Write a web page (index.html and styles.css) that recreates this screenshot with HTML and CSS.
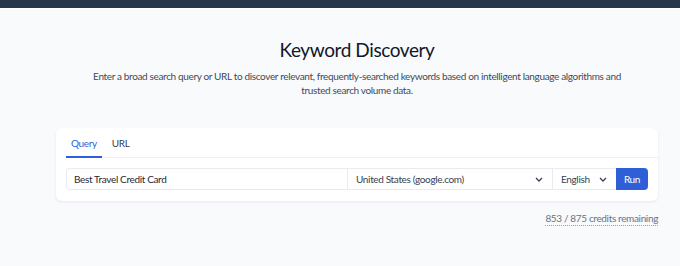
FILE: index.html
```html
<!DOCTYPE html>
<html lang="en">
  <head>
    <meta charset="UTF-8" />
    <meta name="viewport" content="width=device-width, initial-scale=1.0" />
    <title>Keyword Discovery</title>
    <link rel="stylesheet" href="styles.css">
  </head>
  <body>
    <div class="topbar"></div>

    <div class="page">
      <h1>Keyword Discovery</h1>
      <p class="intro">
        Enter a broad search query or URL to discover relevant, frequently-searched keywords based on intelligent language algorithms and trusted search volume data.
      </p>

      <div class="card">
        <div class="tabs">
          <span class="tab active">Query</span>
          <span class="tab">URL</span>
        </div>

        <form class="search-row">
          <input type="text" class="query" value="Best Travel Credit Card" />
          <div class="select country">
            <span>United States (google.com)</span>
            <svg class="chevron" width="8" height="5" viewBox="0 0 8 5">
              <path d="M1 1l3 3 3-3" fill="none" stroke="#374151" stroke-width="1.3" />
            </svg>
          </div>
          <div class="select language">
            <span>English</span>
            <svg class="chevron" width="8" height="5" viewBox="0 0 8 5">
              <path d="M1 1l3 3 3-3" fill="none" stroke="#374151" stroke-width="1.3" />
            </svg>
          </div>
          <button type="submit">Run</button>
        </form>
      </div>

      <div class="credits">
        <span>853 / 875 credits remaining</span>
      </div>
    </div>
  </body>
</html>
```

FILE: styles.css
```css
body {
  margin: 0;
  padding: 0;
  font-family: Lato, "Noto Sans", sans-serif;
  letter-spacing: -0.35px;
  background-color: #f8fafc;
  color: #1f2937;
}

.topbar {
  height: 8px;
  background-color: #27374a;
  border-bottom: 1px solid #ffffff;
}

.page {
  width: 602px;
  margin-left: 56px;
}

h1 {
  margin: 29px 0 0;
  text-align: center;
  font-size: 19px;
  font-weight: 400;
  letter-spacing: -0.4px;
  line-height: 24px;
  color: #111827;
}

.intro {
  margin: 7px auto 0;
  width: 540px;
  text-align: center;
  font-size: 10px;
  line-height: 14px;
  color: #3f4a5a;
}

.card {
  margin-top: 31px;
  background: white;
  border-radius: 6px;
  box-shadow: 0 1px 3px rgba(15, 23, 42, 0.08);
  padding: 0 10px 11px;
}

.tabs {
  display: flex;
  border-bottom: 1px solid #eef0f4;
  margin-right: -10px;
}

.tab {
  padding: 8px 5px 6px;
  margin-right: 5px;
  font-size: 10px;
  line-height: 14px;
  color: #374151;
  border-bottom: 2px solid transparent;
  margin-bottom: -1px;
}

.tab.active {
  color: #2f5fd6;
  border-bottom-color: #2f5fd6;
}

.search-row {
  display: flex;
  margin-top: 10px;
  height: 22px;
}

.query {
  width: 281px;
  box-sizing: border-box;
  margin: 0;
  padding: 0 7px;
  border: 1px solid #e8ebf0;
  border-right: none;
  border-radius: 4px 0 0 4px;
  font-family: inherit;
  letter-spacing: inherit;
  font-size: 10px;
  color: #1f2937;
}

.select {
  display: flex;
  align-items: center;
  justify-content: space-between;
  box-sizing: border-box;
  padding: 0 9px 0 8px;
  border: 1px solid #e8ebf0;
  border-right: none;
  font-size: 10px;
  color: #374151;
}

.country {
  width: 205px;
}

.language {
  width: 64px;
}

button {
  width: 32px;
  border: none;
  border-radius: 0 4px 4px 0;
  background-color: #2f5fd6;
  color: white;
  font-family: inherit;
  letter-spacing: inherit;
  font-size: 10px;
  padding: 0;
}

.credits {
  display: flex;
  justify-content: flex-end;
  margin-top: 11px;
}

.credits span {
  font-size: 10px;
  line-height: 13px;
  color: #6b7280;
  border-bottom: 1px dotted #9ca3af;
}
```
